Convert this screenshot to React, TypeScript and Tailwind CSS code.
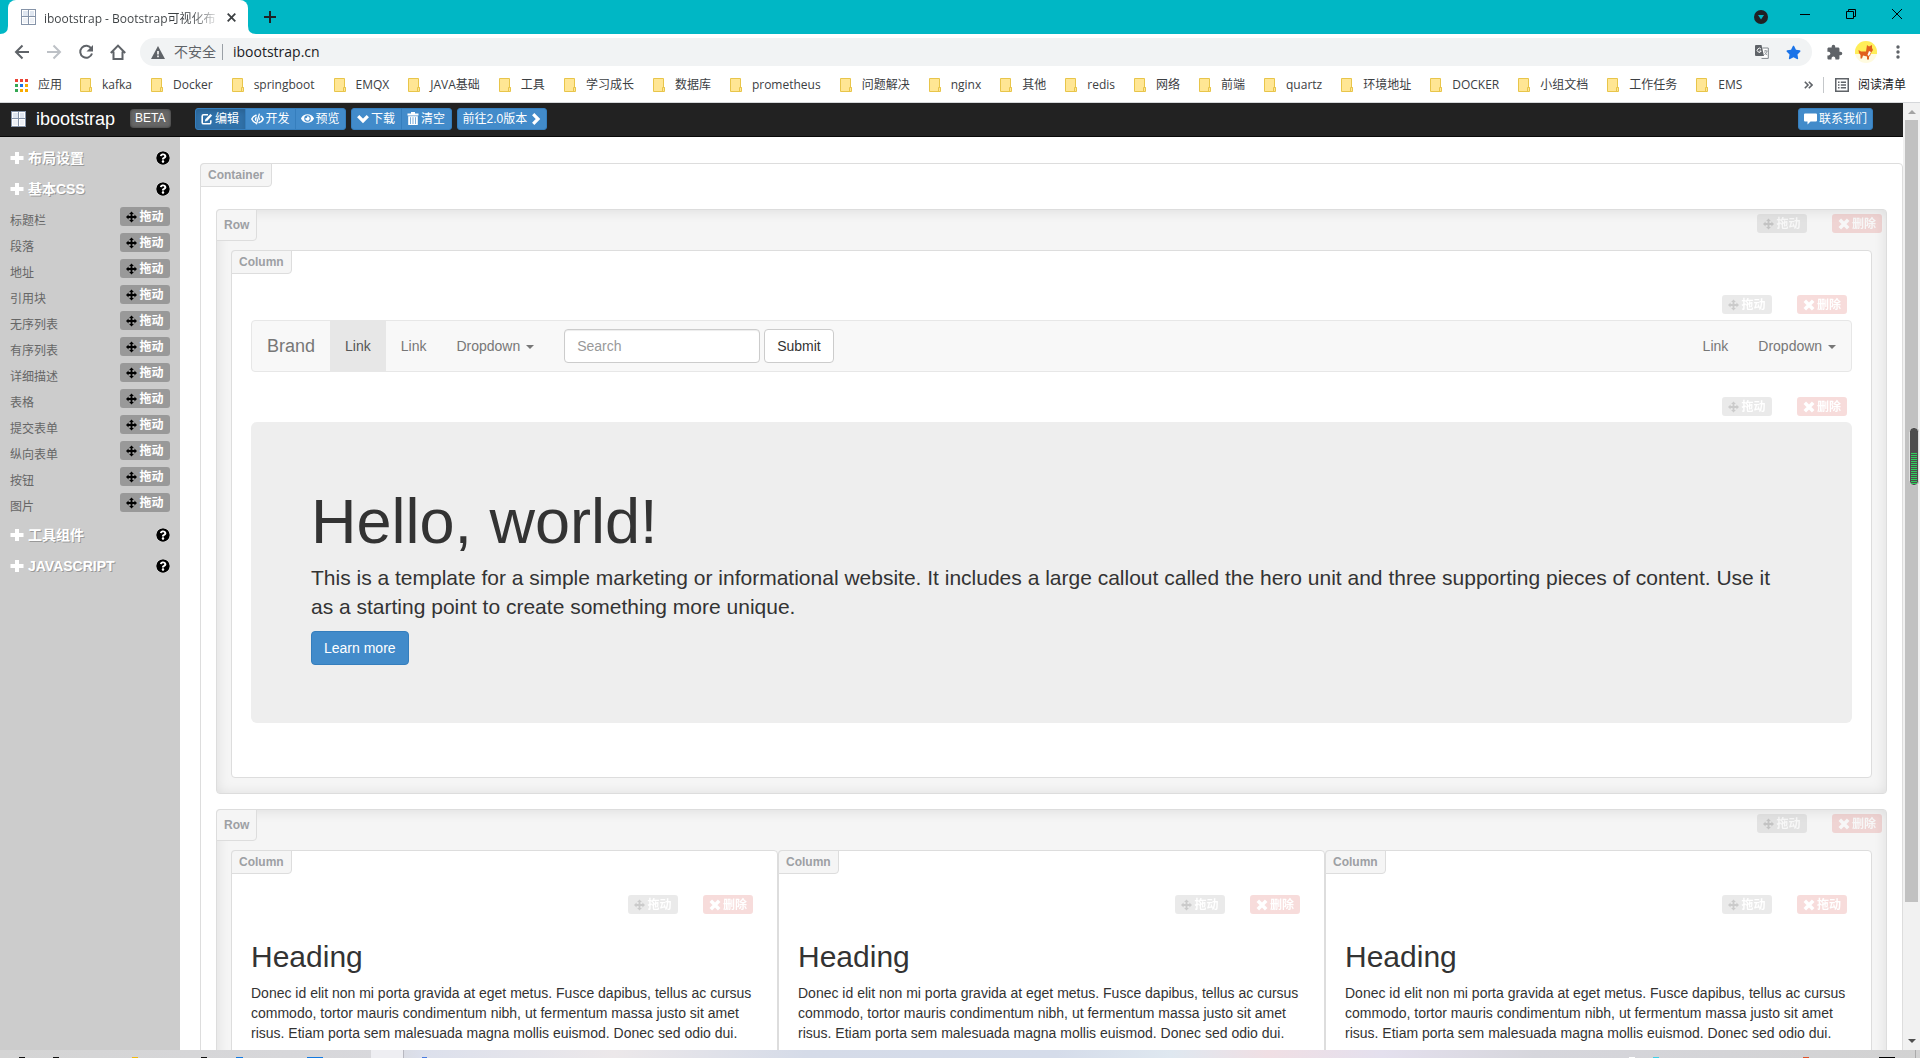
import React from "react";
import { FaEye, FaQuestionCircle, FaStar } from "react-icons/fa";
import { MdExtension } from "react-icons/md";

const bookmarks = [
  "kafka",
  "Docker",
  "springboot",
  "EMQX",
  "JAVA基础",
  "工具",
  "学习成长",
  "数据库",
  "prometheus",
  "问题解决",
  "nginx",
  "其他",
  "redis",
  "网络",
  "前端",
  "quartz",
  "环境地址",
  "DOCKER",
  "小组文档",
  "工作任务",
  "EMS",
];

const cssItems = [
  "标题栏",
  "段落",
  "地址",
  "引用块",
  "无序列表",
  "有序列表",
  "详细描述",
  "表格",
  "提交表单",
  "纵向表单",
  "按钮",
  "图片",
];

const columns = [
  { id: 1, removeLabel: "删除" },
  { id: 2, removeLabel: "删除" },
  { id: 3, removeLabel: "拖动" },
];

/* ---------- icons ---------- */

const WindowGridIcon = ({ className = "" }: { className?: string }) => (
  <svg className={className} width="15" height="16" viewBox="0 0 15 16">
    <rect x="0.5" y="0.5" width="14" height="15" fill="#fff" stroke="#8593a8" />
    <rect x="2" y="2" width="5" height="5" fill="#dfe6f0" />
    <rect x="9" y="2" width="4" height="5" fill="#dfe6f0" />
    <rect x="2" y="9" width="5" height="5" fill="#eef1f6" />
    <rect x="9" y="9" width="4" height="5" fill="#eef1f6" />
    <path d="M7.5 1v14M1 7.5h13" stroke="#8593a8" />
  </svg>
);

const FolderIcon = () => (
  <svg className="shrink-0" width="12" height="14" viewBox="0 0 12 14">
    <path d="M0.5 0.5h10v9h1v4h-11z" fill="#ffe694" stroke="#e8c54a" />
    <path d="M9.5 13v-3.5h2" fill="none" stroke="#e8c54a" />
  </svg>
);

const AppsIcon = () => (
  <svg width="13" height="13" viewBox="0 0 13 13">
    <path d="M0 0h3v3H0zM5 0h3v3H5zM10 0h3v3h-3z" fill="#ea4335" />
    <path d="M0 5h3v3H0zM0 10h3v3H0z" fill="#34a853" />
    <path d="M5 5h3v3H5z" fill="#1a73e8" />
    <path d="M10 5h3v3h-3zM5 10h3v3H5zM10 10h3v3h-3z" fill="#f9ab00" />
  </svg>
);

const EditIcon = () => (
  <svg width="12" height="12" viewBox="0 0 12 12" fill="none" stroke="currentColor">
    <path d="M7 1.8H2.6Q1.2 1.8 1.2 3.2v6.2q0 1.4 1.4 1.4h5.8q1.4 0 1.4-1.4V7.2" strokeWidth="1.6" />
    <path d="M5 7.4L10.3 1.8" strokeWidth="2.4" />
    <path d="M3.8 8.6l.6-2.2 1.6 1.6z" fill="currentColor" stroke="none" />
  </svg>
);

const EyeCloseIcon = () => (
  <svg width="13" height="12" viewBox="0 0 13 12" fill="none" stroke="currentColor">
    <path d="M5 10Q2 9 .8 6 2.2 2.8 5.6 2.2" strokeWidth="1.5" />
    <path d="M9.6 2.8Q11.6 4 12.2 6 11.2 8.8 7.5 9.8" strokeWidth="1.5" />
    <path d="M5.8 3.6Q3.600 4.200 3.800 6.400 4.200 8 5.200 8.200zM8.600 4q1.400 2.200-1 4z" fill="currentColor" stroke="none" />
    <path d="M8.4 .6L5.4 11.4" strokeWidth="1.3" />
  </svg>
);

const TrashIcon = () => (
  <svg width="12" height="13" viewBox="0 0 12 13" fill="currentColor">
    <path d="M4 0h4v1.5h3.5V3.5H.5V1.5H4z" />
    <path d="M1.2 4.2h9.6V13H1.2z" />
    <path d="M3.5 5.2V12M6 5.2V12M8.5 5.2V12" stroke="#428bca" strokeWidth=".7" />
  </svg>
);

const CommentIcon = () => (
  <svg width="13" height="12" viewBox="0 0 13 12" fill="currentColor">
    <path d="M1 .5h11q1 0 1 1v6q0 1-1 1H6.5L3.5 11.5V8.5H1q-1 0-1-1v-6q0-1 1-1z" />
  </svg>
);

const ChevronDownIcon = () => (
  <svg width="12" height="12" viewBox="0 0 12 12" fill="none" stroke="currentColor" strokeWidth="3.2">
    <path d="M1.2 3.2L6 8l4.800-4.800" />
  </svg>
);

const ChevronRightIcon = () => (
  <svg width="10" height="12" viewBox="0 0 10 12" fill="none" stroke="currentColor" strokeWidth="3.2">
    <path d="M2.200 1.200L7 6l-4.800 4.800" />
  </svg>
);

const PlusIcon = () => (
  <svg width="14" height="14" viewBox="0 0 14 14" fill="currentColor">
    <path d="M5 1h4v4h4.500v4H9v4H5V9H.5V5H5z" />
  </svg>
);

const MoveIcon = () => (
  <svg width="11" height="12" viewBox="0 0 12 12" fill="currentColor">
    <path d="M6 0l2.600 2.800H7v2.200h2.200V3.400L12 6 9.200 8.600V7H7v2.200h1.600L6 12 3.400 9.200H5V7H2.800v1.600L0 6l2.800-2.600V5H5V2.800H3.400z" />
  </svg>
);

const RemoveIcon = () => (
  <svg width="12" height="12" viewBox="0 0 12 12" fill="none" stroke="currentColor" strokeWidth="3.600">
    <path d="M1.800 1.800l8.400 8.400M10.200 1.800l-8.400 8.400" />
  </svg>
);

const Caret = () => (
  <span className="ml-[2px] inline-block border-x-4 border-t-4 border-x-transparent border-t-current align-middle" />
);

/* ---------- browser chrome ---------- */

const TabStrip = () => (
  <div className="flex h-[34px] items-center bg-[#00b7c5] pl-2">
    <div className="relative flex h-full w-60 items-center rounded-t-lg bg-white pl-[13px]">
      <svg className="absolute -left-2 bottom-0" width="8" height="8">
        <path d="M8 0v8H0Q8 8 8 0z" fill="#fff" />
      </svg>
      <svg className="absolute -right-2 bottom-0" width="8" height="8">
        <path d="M0 0v8h8Q0 8 0 0z" fill="#fff" />
      </svg>
      <WindowGridIcon />
      <span className="ml-2 flex-1 whitespace-nowrap">
        <span className="bg-linear-to-r from-[#3c4043] from-85% to-[#3c4043]/20 bg-clip-text text-xs text-transparent">
          ibootstrap - Bootstrap可视化布
        </span>
      </span>
      <button aria-label="Close tab" className="mr-3">
        <svg width="9" height="9" viewBox="0 0 9 9" stroke="#3c4043" strokeWidth="1.8">
          <path d="M.7 .7l7.6 7.6M8.3 .7L.7 8.3" />
        </svg>
      </button>
    </div>
    <button aria-label="New tab" className="ml-4">
      <svg width="12" height="12" viewBox="0 0 12 12" stroke="#202124" strokeWidth="2">
        <path d="M6 0v12M0 6h12" />
      </svg>
    </button>
    <div className="ml-auto flex items-center pr-[18px]">
      <svg className="mr-8" width="14" height="14" viewBox="0 0 14 14">
        <circle cx="7" cy="7" r="7" fill="#202124" />
        <path d="M4 5h6L7 9.5z" fill="#00b7c5" />
      </svg>
      <div className="flex items-center gap-9 pb-[6px]">
        <button aria-label="Minimize">
          <svg width="10" height="10" viewBox="0 0 10 10">
            <path d="M0 5.5h10" stroke="#000" />
          </svg>
        </button>
        <button aria-label="Restore">
          <svg width="10" height="10" viewBox="0 0 10 10" fill="none" stroke="#000">
            <path d="M.5 2.5h7v7h-7zM2.5 2.5v-2h7v7h-2" />
          </svg>
        </button>
        <button aria-label="Close">
          <svg width="10" height="10" viewBox="0 0 10 10" stroke="#000">
            <path d="M0 0l10 10M10 0L0 10" />
          </svg>
        </button>
      </div>
    </div>
  </div>
);

const AddressBar = () => (
  <div className="flex h-9 items-center bg-white pl-[14px]">
    <div className="flex items-center gap-4 text-[#5f6368]">
      <button aria-label="Back">
        <svg width="16" height="16" viewBox="0 0 16 16" fill="none" stroke="currentColor" strokeWidth="2">
          <path d="M15 8H2.5M8.5 1.5L2 8l6.5 6.5" />
        </svg>
      </button>
      <button aria-label="Forward" className="text-[#bdc1c6]">
        <svg width="16" height="16" viewBox="0 0 16 16" fill="none" stroke="currentColor" strokeWidth="2">
          <path d="M1 8h12.5M7.5 1.5L14 8l-6.5 6.5" />
        </svg>
      </button>
      <button aria-label="Reload">
        <svg width="16" height="16" viewBox="0 0 16 16" fill="none" stroke="currentColor" strokeWidth="2">
          <path d="M13.3 4.5A6 6 0 1 0 14 9.5" />
          <path d="M15 1v6.5H8.5z" fill="currentColor" stroke="none" />
        </svg>
      </button>
      <button aria-label="Home">
        <svg width="16" height="16" viewBox="0 0 16 16" fill="none" stroke="currentColor" strokeWidth="2">
          <path d="M.8 9L8 1.6 15.2 9M3.5 7.5V15h9V7.5" />
        </svg>
      </button>
    </div>
    <div className="ml-[14px] flex h-7 flex-1 items-center rounded-full bg-[#f1f3f4] pr-[11px] pl-[11px] text-sm">
      <svg width="14" height="13" viewBox="0 0 14 13">
        <path d="M7 0l7 13H0z" fill="#5f6368" />
        <path d="M6.2 5h1.6v3.5H6.2zM6.2 9.6h1.6v1.6H6.2z" fill="#fff" />
      </svg>
      <span className="ml-[9px] text-[#5f6368]">不安全</span>
      <span className="ml-[6px] h-4 w-px bg-[#9aa0a6]" />
      <input aria-label="Address" className="ml-[10px] min-w-0 flex-1 bg-transparent text-[#202124] outline-none" defaultValue="ibootstrap.cn" />
      <svg width="14" height="14" viewBox="0 0 14 14">
        <path d="M7.5 3h5.8v10.4H6.5" fill="#fff" stroke="#80868b" />
        <path d="M1 0h5.5L9 11H1q-1 0-1-1V1q0-1 1-1z" fill="#5f6368" />
        <path d="M6 4.2A2 2 0 1 0 6.2 6H4.5" fill="none" stroke="#fff" />
        <path d="M9 6h3.6M10.8 5v1M12 6.2q-.8 2.4-2.6 3.8M9.6 7.2q1 1.8 2.6 2.8" fill="none" stroke="#80868b" strokeWidth=".8" />
      </svg>
      <FaStar className="ml-[17px] size-[15px] text-[#1a73e8]" />
    </div>
    <div className="flex items-center pr-5 pl-[14px]">
      <MdExtension className="size-[17px] text-[#5f6368]" />
      <svg className="ml-3" width="22" height="22" viewBox="0 0 22 22">
        <circle cx="11" cy="11" r="11" fill="#fffbe0" />
        <path d="M0 13V11a11 11 0 0 1 22 0v2z" fill="#ffee58" />
        <path d="M12 4l2 1.5L17 4v3l1 2-2 3-1 3-1 .5v3h-2v-3l-4-1-1 3H5.5V14L4 12l-.5-3L6 10.5h5z" fill="#e0601e" />
        <path d="M14 10l2 1-2 4-1.5-1z" fill="#fff" />
      </svg>
      <svg className="ml-[19px]" width="4" height="14" viewBox="0 0 4 14" fill="#5f6368">
        <circle cx="2" cy="2" r="1.7" />
        <circle cx="2" cy="7" r="1.7" />
        <circle cx="2" cy="12" r="1.7" />
      </svg>
    </div>
  </div>
);

const BookmarkBar = () => (
  <nav className="flex h-[33px] items-center border-b border-[#d5d7da] bg-white pr-[14px] pb-[2px] pl-[15px] text-xs whitespace-nowrap text-[#3c4043]">
    <a href="#" className="flex items-center gap-[10px]">
      <AppsIcon />
      应用
    </a>
    <div className="ml-[18px] flex items-center gap-[19px]">
      {bookmarks.map((name) => (
        <a href="#" key={name} className="flex items-center gap-[10px]">
          <FolderIcon />
          {name}
        </a>
      ))}
    </div>
    <div className="ml-auto flex items-center text-[#202124]">
      <svg width="9" height="8" viewBox="0 0 9 8" fill="none" stroke="#5f6368" strokeWidth="1.6">
        <path d="M.8 .8L4 4 .8 7.2M4.8 .8L8 4 4.8 7.2" />
      </svg>
      <span className="ml-[10px] h-4 w-px bg-[#c4c7ca]" />
      <a href="#" className="ml-[11px] flex items-center gap-[9px]">
        <svg width="14" height="14" viewBox="0 0 14 14" fill="none" stroke="#5f6368" strokeWidth="1.5">
          <path d="M.75 .75h12.5v12.5H.75z" />
          <path d="M3 4.2h1.5M5.8 4.2H11M3 7h1.5M5.8 7H11M3 9.8h1.5M5.8 9.8H11" />
        </svg>
        阅读清单
      </a>
    </div>
  </nav>
);

/* ---------- builder page ---------- */

const HeaderButton = ({ icon, children, className = "" }: { icon?: React.ReactNode; children: React.ReactNode; className?: string }) => (
  <button className={`flex h-[22px] items-center justify-center gap-[2px] border border-[#357ebd] text-xs whitespace-nowrap text-white ${className}`}>
    {icon}
    {children}
  </button>
);

const Header = () => (
  <header className="flex h-[34px] items-center border-b border-[#080808] bg-[#222] pr-[30px] pb-[2px] pl-[11px]">
    <WindowGridIcon />
    <a href="#" className="ml-[10px] text-lg leading-5 text-white">ibootstrap</a>
    <span className="ml-[15px] rounded-sm bg-[#666] px-[5px] text-xs leading-[19px] text-white shadow-[inset_0_0_3px_#333]">BETA</span>
    <div className="ml-6 flex items-center gap-[5px]">
      <div className="flex -space-x-px">
        <HeaderButton icon={<EditIcon />} className="w-[51px] rounded-l-[3px] bg-[#3071a9] shadow-[inset_0_3px_5px_rgba(0,0,0,0.125)]">编辑</HeaderButton>
        <HeaderButton icon={<EyeCloseIcon />} className="w-[51px] bg-[#428bca]">开发</HeaderButton>
        <HeaderButton icon={<FaEye className="size-[13px]" />} className="w-[51px] rounded-r-[3px] bg-[#428bca]">预览</HeaderButton>
      </div>
      <div className="flex -space-x-px">
        <HeaderButton icon={<ChevronDownIcon />} className="w-[51px] rounded-l-[3px] bg-[#428bca]">下载</HeaderButton>
        <HeaderButton icon={<TrashIcon />} className="w-[51px] rounded-r-[3px] bg-[#428bca]">清空</HeaderButton>
      </div>
      <a href="#" className="flex h-[22px] items-center gap-1 rounded-[3px] border border-[#357ebd] bg-[#428bca] px-[5px] text-xs text-white">
        前往2.0版本
        <ChevronRightIcon />
      </a>
    </div>
    <HeaderButton icon={<CommentIcon />} className="ml-auto rounded-[3px] bg-[#428bca] px-[5px]">联系我们</HeaderButton>
  </header>
);

const DragLabel = () => (
  <button className="flex h-[19px] w-[50px] items-center justify-center gap-[2px] rounded-[3px] bg-[#999] text-xs leading-none font-bold text-white">
    <span className="text-black">
      <MoveIcon />
    </span>
    拖动
  </button>
);

const Tools = ({ removeLabel = "删除" }: { removeLabel?: string }) => (
  <div className="flex justify-end gap-[25px] pr-[5px] opacity-20">
    <DragLabel />
    <button className="flex h-[19px] w-[50px] items-center justify-center gap-[2px] rounded-[3px] bg-[#d9534f] text-xs leading-none font-bold text-white">
      <RemoveIcon />
      {removeLabel}
    </button>
  </div>
);

const SectionTitle = ({ children }: { children: React.ReactNode }) => (
  <div className="flex h-[31px] items-center text-sm font-bold text-white">
    <PlusIcon />
    <h3 className="ml-1 text-shadow-[1px_1px_0_#999]">{children}</h3>
    <button aria-label="Help" className="ml-auto text-black">
      <FaQuestionCircle className="size-[14px] rounded-full bg-white" />
    </button>
  </div>
);

const Sidebar = () => (
  <aside className="w-[180px] shrink-0 bg-[#ccc] px-[10px] pt-[5px]">
    <SectionTitle>布局设置</SectionTitle>
    <SectionTitle>基本CSS</SectionTitle>
    <ul className="mt-px mb-[2px]">
      {cssItems.map((item) => (
        <li key={item} className="flex h-[26px] items-start justify-between pt-[2px] text-xs text-[#666]">
          <span className="leading-7">{item}</span>
          <DragLabel />
        </li>
      ))}
    </ul>
    <SectionTitle>工具组件</SectionTitle>
    <SectionTitle>JAVASCRIPT</SectionTitle>
  </aside>
);

const Tag = ({ children, className = "" }: { children: React.ReactNode; className?: string }) => (
  <span className={`absolute -top-px -left-px rounded-tl rounded-br border border-[#ddd] bg-[#f5f5f5] px-[7px] text-xs font-bold text-[#9da0a4] ${className}`}>
    {children}
  </span>
);

const Row = ({ children }: { children: React.ReactNode }) => (
  <section className="relative rounded border border-[#ddd] bg-[#f5f5f5] px-[14px] pt-1 pb-[15px] shadow-[inset_0_1px_13px_rgba(0,0,0,0.1)]">
    <Tag className="leading-[30px]">Row</Tag>
    <div className="-mr-[15px] mb-[17px]">
      <Tools />
    </div>
    <div className="flex">{children}</div>
  </section>
);

const Column = ({ children }: { children: React.ReactNode }) => (
  <div className="relative min-w-0 flex-1 rounded border border-[#ddd] bg-white px-[19px] pt-11 pb-[54px]">
    <Tag className="leading-[22px]">Column</Tag>
    {children}
  </div>
);

const DemoNavbar = () => (
  <nav className="mt-[6px] flex items-stretch rounded border border-[#e7e7e7] bg-[#f8f8f8] text-sm leading-5 text-[#777]">
    <a href="#" className="p-[15px] text-lg leading-5">Brand</a>
    <a href="#" className="bg-[#e7e7e7] p-[15px] text-[#555]">Link</a>
    <a href="#" className="p-[15px]">Link</a>
    <a href="#" className="p-[15px]">
      Dropdown <Caret />
    </a>
    <form className="flex items-center gap-1 pl-[15px]">
      <input
        type="text"
        aria-label="Search"
        placeholder="Search"
        className="h-[34px] w-[196px] rounded border border-[#ccc] bg-white px-3 shadow-[inset_0_1px_1px_rgba(0,0,0,0.075)] placeholder:text-[#999]"
      />
      <button type="button" className="h-[34px] rounded border border-[#ccc] bg-white px-3 text-[#333]">Submit</button>
    </form>
    <a href="#" className="ml-auto p-[15px]">Link</a>
    <a href="#" className="p-[15px]">
      Dropdown <Caret />
    </a>
  </nav>
);

const Jumbotron = () => (
  <div className="mt-[6px] rounded-md bg-[#eee] px-[60px] pt-[68px] pb-[58px] text-[#333]">
    <h1 className="mb-[10px] text-[63px] leading-[63px]">Hello, world!</h1>
    <p className="mb-[10px] text-[21px] leading-[29px]">
      This is a template for a simple marketing or informational website. It includes a large callout called the hero
      unit and three supporting pieces of content. Use it as a starting point to create something more unique.
    </p>
    <a href="#" className="inline-block rounded border border-[#357ebd] bg-[#428bca] px-3 py-[6px] align-top text-sm leading-5 text-white">
      Learn more
    </a>
  </div>
);

const Scrollbar = () => (
  <div className="flex w-[17px] shrink-0 flex-col items-center bg-[#f1f1f1]">
    <svg className="shrink-0" width="17" height="17">
      <path d="M5 11l4-4 4 4z" fill="#a3a3a3" />
    </svg>
    <div className="w-[13px] grow-[782] bg-[#c1c1c1]" />
    <div className="grow-[131]" />
    <svg className="shrink-0" width="17" height="17">
      <path d="M5 6l4 4 4-4z" fill="#505050" />
    </svg>
  </div>
);

const Taskbar = () => (
  <div className="flex h-2 shrink-0 justify-between bg-[linear-gradient(90deg,#d4d4d4_0%,#d8d8dc_20%,#dce0ec_22%,#ece8ea_32%,#d5dbe8_42%,#d5dcea_55%,#dfe8f0_61%,#f0dfe4_66%,#e4e0ee_72%,#d6d6dc_80%,#d2d2d2_100%)]">
    <svg width="440" height="8">
      <path d="M371 0h32v8h-32z" fill="#eeeef2" />
      <path d="M403 0h1v8h-1z" fill="#b8b8c0" />
      <path d="M19 7h6v1h-6zM53 7h6v1h-6zM201 7h6v1h-6z" fill="#111" />
      <path d="M132 7h6v1h-6z" fill="#f2b90f" />
      <path d="M236 7h7v1h-7zM307 7h16v1h-16z" fill="#1379e0" />
      <path d="M422 7h5v1h-5z" fill="#4a7be0" />
    </svg>
    <svg width="300" height="8">
      <path d="M9 7h6v1H9z" fill="#fff" />
      <path d="M33 7h6v1h-6z" fill="#3fd0e8" />
      <path d="M183 7h6v1h-6z" fill="#e0522a" />
      <path d="M259 7h16v1h-16z" fill="#000" />
      <path d="M295 0h1v8h-1z" fill="#aaa" />
    </svg>
  </div>
);

const App = () => {
  return (
    <div className="relative flex h-screen flex-col overflow-hidden bg-white font-['Open_Sans','Noto_Sans_CJK_SC',sans-serif]">
      <TabStrip />
      <AddressBar />
      <BookmarkBar />

      <div className="flex min-h-0 flex-1">
        <div className="flex min-w-0 flex-1 flex-col font-['Liberation_Sans','Noto_Sans_CJK_SC',sans-serif]">
          <Header />
          <div className="flex min-h-0 flex-1 overflow-hidden">
            <Sidebar />
            <main className="min-w-0 flex-1 pt-[26px] pl-5">
              <div className="relative flex flex-col gap-[15px] rounded border border-[#ddd] px-[15px] pt-[45px] pb-4">
                <Tag className="leading-[22px]">Container</Tag>
                <Row>
                  <Column>
                    <Tools />
                    <DemoNavbar />
                    <div className="mt-[25px]">
                      <Tools />
                    </div>
                    <Jumbotron />
                  </Column>
                </Row>
                <Row>
                  {columns.map((column) => (
                    <Column key={column.id}>
                      <Tools removeLabel={column.removeLabel} />
                      <div className="pt-[26px] text-sm leading-5 text-[#333]">
                        <h2 className="mb-[10px] text-3xl leading-[33px]">Heading</h2>
                        <p>
                          Donec id elit non mi porta gravida at eget metus. Fusce dapibus, tellus ac cursus commodo,
                          tortor mauris condimentum nibh, ut fermentum massa justo sit amet risus. Etiam porta sem
                          malesuada magna mollis euismod. Donec sed odio dui.
                        </p>
                      </div>
                    </Column>
                  ))}
                </Row>
              </div>
            </main>
          </div>
        </div>
        <Scrollbar />
      </div>
      <Taskbar />

      {/* floating level meter on the window edge */}
      <svg className="absolute top-[427px] right-px" width="10" height="59" viewBox="0 0 10 59">
        <rect x=".5" y=".5" width="9" height="58" rx="4" fill="#4d4d4d" stroke="#ddd" />
        <path d="M5 26v31" stroke="#2fd05c" strokeWidth="6" strokeDasharray="1 1" />
      </svg>
    </div>
  );
};

export default App;
